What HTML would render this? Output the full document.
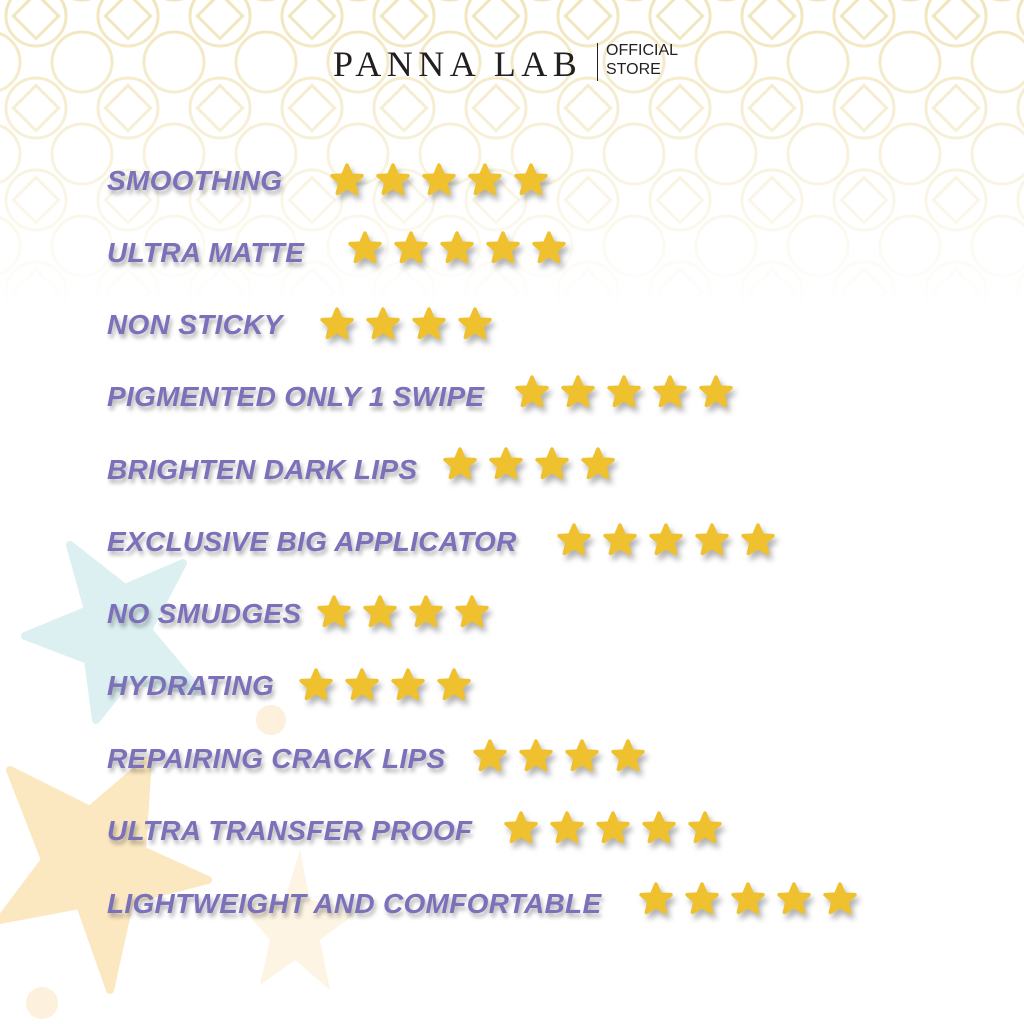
<!DOCTYPE html>
<html><head><style>
body{margin:0;width:1024px;height:1024px;overflow:hidden;background:#fff;position:relative;font-family:"Liberation Sans",sans-serif}
.bg{position:absolute;left:0;top:0}
.lbl{position:absolute;left:107px;font-weight:bold;font-style:italic;font-size:28px;letter-spacing:0.3px;color:#7b70ba;text-shadow:2px 4px 4px rgba(0,0,0,.3);line-height:30px;white-space:nowrap}
.st{position:absolute;width:36px;height:36px;filter:drop-shadow(3px 5px 3px rgba(0,0,0,.3))}
</style></head><body>
<svg class="bg" width="1024" height="1024">
<defs>
<pattern id="p" width="92" height="92" patternUnits="userSpaceOnUse" x="-10" y="-30">
<g fill="none" stroke="#f1e5bb" stroke-width="3">
<circle cx="46" cy="46" r="30"/><circle cx="0" cy="0" r="30"/><circle cx="92" cy="0" r="30"/><circle cx="0" cy="92" r="30"/><circle cx="92" cy="92" r="30"/>
<rect x="30" y="30" width="32" height="32" transform="rotate(45 46 46)"/>
</g></pattern>
<linearGradient id="f" x1="0" y1="0" x2="0" y2="1"><stop offset="0" stop-color="#fff"/><stop offset=".3" stop-color="#fff" stop-opacity=".7"/><stop offset="1" stop-color="#fff" stop-opacity="0"/></linearGradient>
<mask id="m"><rect width="1024" height="310" fill="url(#f)"/></mask>
<symbol id="s" viewBox="0 0 34 34"><polygon points="17,3 21,12.5 31,13 23.5,19.5 26,29.5 17,24 8,29.5 10.5,19.5 3,13 13,12.5" fill="#efc12f" stroke="#efc12f" stroke-width="3.5" stroke-linejoin="round"/></symbol>
</defs>
<rect width="1024" height="310" fill="url(#p)" mask="url(#m)"/>
<polygon points="183,563 148,630 200,692 128,680 96,720 88,660 25,636 88,610 70,545 125,588" fill="#d6eef0" opacity=".85" stroke="#d6eef0" stroke-width="8" stroke-linejoin="round"/>
<polygon points="148,760 142,850 208,880 130,900 110,990 80,905 0,920 45,860 10,770 90,810" fill="#fbe6bb" opacity=".9" stroke="#fbe6bb" stroke-width="8" stroke-linejoin="round"/>
<polygon points="300,850 310,900 360,910 320,940 330,990 295,960 260,985 270,940 240,905 285,900" fill="#fdf3e0" opacity=".9"/>
<circle cx="271" cy="720" r="15" fill="#fdf0dc"/>
<circle cx="42" cy="1003" r="16" fill="#fdf0dc"/>
</svg>
<div style="position:absolute;left:333px;top:44px;font-size:36px;letter-spacing:5.5px;color:#231f20;font-family:'Liberation Serif',serif;line-height:40px">PANNA LAB</div>
<div style="position:absolute;left:597px;top:43px;width:1px;height:38px;background:#231f20"></div>
<div style="position:absolute;left:606px;top:41px;font-size:16px;line-height:19px;color:#231f20">OFFICIAL<br>STORE</div>

<div class="lbl" style="top:166px">SMOOTHING</div>
<div class="lbl" style="top:238px">ULTRA MATTE</div>
<div class="lbl" style="top:310px">NON STICKY</div>
<div class="lbl" style="top:382px">PIGMENTED ONLY 1 SWIPE</div>
<div class="lbl" style="top:455px">BRIGHTEN DARK LIPS</div>
<div class="lbl" style="top:527px">EXCLUSIVE BIG APPLICATOR</div>
<div class="lbl" style="top:599px">NO SMUDGES</div>
<div class="lbl" style="top:671px">HYDRATING</div>
<div class="lbl" style="top:744px">REPAIRING CRACK LIPS</div>
<div class="lbl" style="top:816px">ULTRA TRANSFER PROOF</div>
<div class="lbl" style="top:889px">LIGHTWEIGHT AND COMFORTABLE</div>

<div id="stars"></div>
<script>
var rows=[[181,347,5],[249,365,5],[325,337,4],[393,532,5],[465,460,4],[541,574,5],[613,334,4],[686,316,4],[757,490,4],[829,521,5],[900,656,5]];
var h='';rows.forEach(function(r){for(var i=0;i<r[2];i++){h+='<svg class="st" style="left:'+(r[1]+i*46-18)+'px;top:'+(r[0]-19)+'px" viewBox="0 0 34 34"><use href="#s"/></svg>';}});
document.getElementById('stars').innerHTML=h;
</script>
</body></html>
